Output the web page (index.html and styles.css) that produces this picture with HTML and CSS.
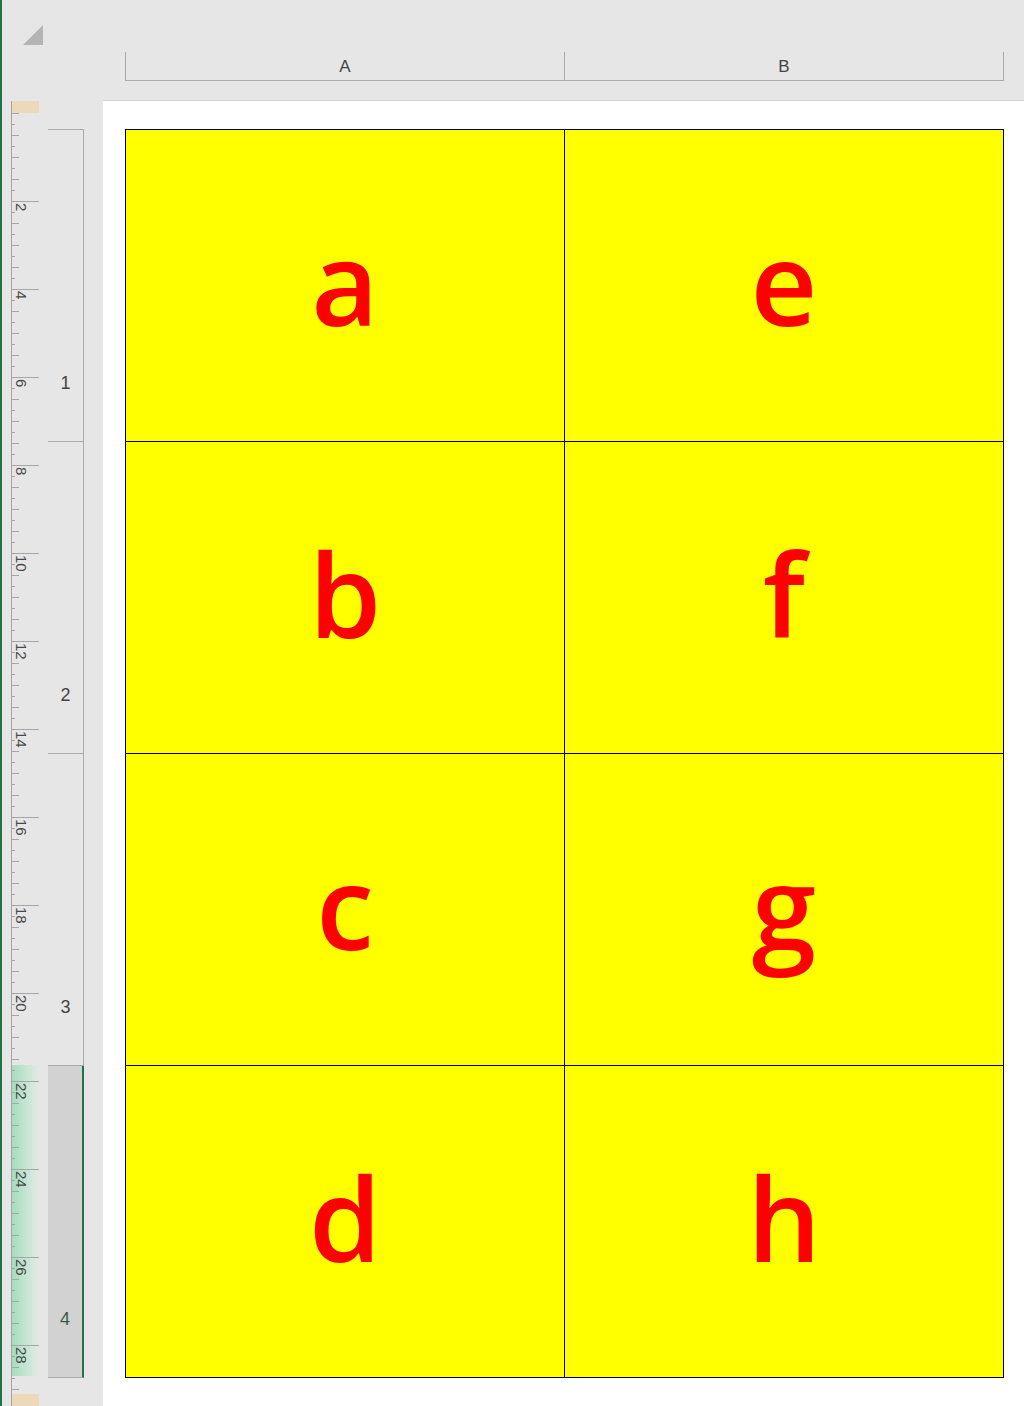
FILE: index.html
```html
<!DOCTYPE html>
<html>
<head>
<meta charset="utf-8">
<link rel="stylesheet" href="styles.css">
</head>
<body>
<div class="app">
  <div class="corner">
    <svg class="select-all" width="21" height="21" viewBox="0 0 21 21"><polygon points="20,0 20,20 0,20" fill="#b4b4b4"/></svg>
  </div>
  <div class="top">
    <div class="colheads">
      <div class="colhead">A</div>
      <div class="colhead">B</div>
    </div>
  </div>
  <div class="side">
    <div class="ruler">
      <div class="margin-mark"></div>
      <div class="scale">
        <div class="scale-start"></div>
        <div class="major"><span>2</span></div>
        <div class="major"><span>4</span></div>
        <div class="major"><span>6</span></div>
        <div class="major"><span>8</span></div>
        <div class="major"><span>10</span></div>
        <div class="major"><span>12</span></div>
        <div class="major"><span>14</span></div>
        <div class="major"><span>16</span></div>
        <div class="major"><span>18</span></div>
        <div class="major"><span>20</span></div>
        <div class="major"><span>22</span></div>
        <div class="major"><span>24</span></div>
        <div class="major"><span>26</span></div>
        <div class="major"><span>28</span></div>
      </div>
      <div class="margin-mark"></div>
    </div>
    <div class="rowheads">
      <div class="rowhead">1</div>
      <div class="rowhead">2</div>
      <div class="rowhead">3</div>
      <div class="rowhead selected">4</div>
    </div>
  </div>
  <div class="page">
    <div class="sheet">
      <div class="cell">a</div>
      <div class="cell">e</div>
      <div class="cell">b</div>
      <div class="cell">f</div>
      <div class="cell">c</div>
      <div class="cell">g</div>
      <div class="cell">d</div>
      <div class="cell">h</div>
    </div>
  </div>
</div>
</body>
</html>
```
FILE: styles.css
```css
html, body {
  margin: 0;
  padding: 0;
}
body {
  width: 1024px;
  height: 1406px;
  overflow: hidden;
  background: #e6e6e6;
  font-family: "Liberation Sans", Arial, sans-serif;
}
.app {
  display: grid;
  grid-template-columns: 101px 921px;
  grid-template-rows: 101px 1305px;
  height: 1406px;
  border-left: 2px solid #217346;
}
.corner {
  padding: 25px 0 0 21px;
}
.select-all {
  display: block;
}
.top {
  border-bottom: 1px solid #d2d2d2;
  box-sizing: border-box;
  padding: 52px 0 0 22px;
}
.colheads {
  display: flex;
  width: 879px;
  height: 29px;
  box-sizing: border-box;
  border: 1px solid #ababab;
  border-top: none;
}
.colhead {
  flex: 1;
  display: flex;
  align-items: center;
  justify-content: center;
  font-size: 17px;
  color: #444;
  padding-top: 1px;
}
.colhead + .colhead {
  border-left: 1px solid #ababab;
}
.side {
  display: flex;
  padding-left: 9px;
}
.ruler {
  width: 27px;
  display: flex;
  flex-direction: column;
  border-left: 1px solid #a6a6a6;
  height: 1305px;
}
.margin-mark {
  height: 12px;
  background: #ecd9b9;
  flex: none;
}
.scale {
  height: 1281px;
  flex: none;
  overflow: hidden;
  display: flex;
  flex-direction: column;
  background-image:
    linear-gradient(to bottom, #a6a6a6 0 1px, transparent 1px),
    linear-gradient(to bottom, #a6a6a6 0 1px, transparent 1px),
    linear-gradient(to right, #a5dcbf, #c9e7d6 60%, #e6e6e6);
  background-size: 7px 22px, 3px 11px, 27px 311px;
  background-repeat: repeat-y, repeat-y, no-repeat;
  background-position: 0 0, 0 0, 0 952px;
}
.scale-start {
  height: 88px;
  flex: none;
}
.major {
  height: 88px;
  flex: none;
  box-sizing: border-box;
  border-top: 1px solid #a6a6a6;
  padding: 1px 0 0 2px;
}
.major span {
  display: block;
  writing-mode: vertical-rl;
  font-size: 15px;
  line-height: 15px;
  color: #4a4a4a;
}
.rowheads {
  margin-left: 9px;
  margin-top: 28px;
  width: 36px;
  display: flex;
  flex-direction: column;
  border-top: 1px solid #ababab;
  align-self: flex-start;
}
.rowhead {
  height: 312px;
  box-sizing: border-box;
  border-bottom: 1px solid #ababab;
  border-right: 1px solid #ababab;
  display: flex;
  align-items: flex-end;
  justify-content: center;
  padding-bottom: 48px;
  font-size: 18px;
  line-height: 20px;
  color: #444;
}
.rowhead.selected {
  background: #d2d2d2;
  border-right: 2px solid #217346;
  color: #3d5a49;
}
.page {
  background: #fff;
  padding: 28px 0 0 22px;
}
.sheet {
  display: grid;
  grid-template-columns: 438px 438px;
  grid-template-rows: repeat(4, 311px);
  gap: 1px;
  padding: 1px;
  background: #000;
  width: max-content;
}
.cell {
  background: #ffff00;
  color: #ff0000;
  font-family: "Open Sans", "Liberation Sans", sans-serif;
  font-weight: 600;
  font-size: 116px;
  display: flex;
  align-items: center;
  justify-content: center;
  padding-bottom: 10px;
}
```
